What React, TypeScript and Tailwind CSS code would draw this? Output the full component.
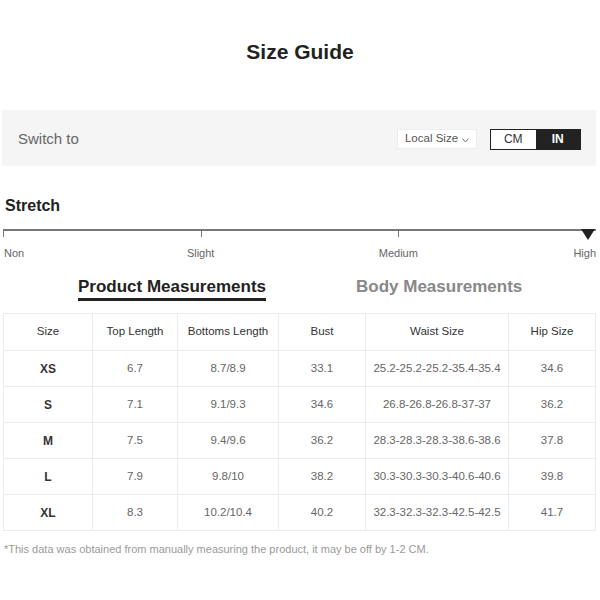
import React, { useState } from 'react';

interface RowI {
  size: string,
  top: string,
  bottoms: string,
  bust: string,
  waist: string,
  hip: string,
}

const rows: RowI[] = [
  { size: 'XS', top: '6.7', bottoms: '8.7/8.9', bust: '33.1', waist: '25.2-25.2-25.2-35.4-35.4', hip: '34.6' },
  { size: 'S', top: '7.1', bottoms: '9.1/9.3', bust: '34.6', waist: '26.8-26.8-26.8-37-37', hip: '36.2' },
  { size: 'M', top: '7.5', bottoms: '9.4/9.6', bust: '36.2', waist: '28.3-28.3-28.3-38.6-38.6', hip: '37.8' },
  { size: 'L', top: '7.9', bottoms: '9.8/10', bust: '38.2', waist: '30.3-30.3-30.3-40.6-40.6', hip: '39.8' },
  { size: 'XL', top: '8.3', bottoms: '10.2/10.4', bust: '40.2', waist: '32.3-32.3-32.3-42.5-42.5', hip: '41.7' },
]

const headers = ['Size', 'Top Length', 'Bottoms Length', 'Bust', 'Waist Size', 'Hip Size']
const colWidths = ['w-[89px]', 'w-[85px]', 'w-[101px]', 'w-[87px]', 'w-[143px]', 'w-[87px]']

const App: React.FC = () => {
  const [unit, setUnit] = useState('IN')
  const [tab, setTab] = useState('product')

  return (
    <div className="w-[600px] min-h-[600px] bg-white font-['Liberation_Sans',Arial,sans-serif] pt-[38px]">
      <h1 className="text-center text-[21px] leading-[28px] font-bold text-[#222]">Size Guide</h1>

      {/* switch bar */}
      <div className="mt-[44px] mx-[2px] w-[594px] h-[56px] bg-[#f5f5f5] flex items-center pl-4 pr-[15px] pt-[2px]">
        <span className="text-[15px] text-[#666]">Switch to</span>
        <div className="ml-auto flex items-center gap-[13px]">
          <button className="w-[80px] h-[20px] bg-white border border-[#ececec] flex items-center justify-center gap-[4px] text-[11.5px] text-[#555]">
            Local Size
            <svg width="7" height="5" viewBox="0 0 7 5" className="mt-[2px]">
              <polyline points="0.5,0.5 3.5,4 6.5,0.5" fill="none" stroke="#777" strokeWidth="1" />
            </svg>
          </button>
          <div className="flex w-[91px] h-[21px] border-[1.5px] border-[#222]">
            <button
              onClick={() => setUnit('CM')}
              className={unit === 'CM' ? 'flex-1 bg-[#222] text-white text-[12px] font-bold' : 'flex-1 bg-white text-[#333] text-[12px]'}
            >CM</button>
            <button
              onClick={() => setUnit('IN')}
              className={unit === 'IN' ? 'flex-1 bg-[#222] text-white text-[12px] font-bold' : 'flex-1 bg-white text-[#333] text-[12px]'}
            >IN</button>
          </div>
        </div>
      </div>

      {/* stretch */}
      <div className="mx-[3px] w-[593px]">
        <h2 className="mt-[30px] ml-[2px] text-[16px] leading-[20px] font-bold text-[#222]">Stretch</h2>
        <div className="relative mt-[13px] h-[12px] border-t-2 border-[#777]">
          <span className="absolute left-0 top-0 w-px h-[6px] bg-[#777]" />
          <span className="absolute left-[33.33%] top-0 w-px h-[6px] bg-[#777]" />
          <span className="absolute left-[66.67%] top-0 w-px h-[6px] bg-[#777]" />
          <svg width="14" height="11" viewBox="0 0 14 11" className="absolute right-[1px] -top-[2px]">
            <polygon points="0,0 14,0 7,11" fill="#222" />
          </svg>
        </div>
        <div className="relative h-[14px] mt-[5px] text-[11px] leading-[14px] text-[#666]">
          <span className="absolute left-[1px] top-0">Non</span>
          <span className="absolute left-[33.33%] top-0 -translate-x-1/2">Slight</span>
          <span className="absolute left-[66.67%] top-0 -translate-x-1/2">Medium</span>
          <span className="absolute right-0 top-0">High</span>
        </div>

        {/* tabs */}
        <div className="mt-[16px] flex text-[17px] leading-[22px] font-bold">
          <button
            onClick={() => setTab('product')}
            className={tab === 'product' ? 'ml-[75px] text-[#222] border-b-[3px] border-[#222]' : 'ml-[75px] text-[#888] border-b-[3px] border-transparent'}
          >Product Measurements</button>
          <button
            onClick={() => setTab('body')}
            className={tab === 'body' ? 'ml-[90px] text-[#222] border-b-[3px] border-[#222]' : 'ml-[90px] text-[#888] border-b-[3px] border-transparent'}
          >Body Measurements</button>
        </div>

        {/* table */}
        <table className="mt-[12px] w-[593px] table-fixed border-collapse text-center text-[11.5px]">
          <thead>
            <tr className="h-[37px]">
              {headers.map((h, i) => (
                <th key={h} className={`${colWidths[i]} border border-[#ebebeb] font-normal text-[#333]`}>{h}</th>
              ))}
            </tr>
          </thead>
          <tbody>
            {rows.map((v) => (
              <tr key={v.size} className="h-[36px]">
                <td className="border border-[#ebebeb] font-bold text-[#333] text-[12px]">{v.size}</td>
                <td className="border border-[#ebebeb] text-[#666]">{v.top}</td>
                <td className="border border-[#ebebeb] text-[#666]">{v.bottoms}</td>
                <td className="border border-[#ebebeb] text-[#666]">{v.bust}</td>
                <td className="border border-[#ebebeb] text-[#666]">{v.waist}</td>
                <td className="border border-[#ebebeb] text-[#666]">{v.hip}</td>
              </tr>
            ))}
          </tbody>
        </table>

        <p className="mt-[11px] ml-[1px] text-[11px] leading-[14px] text-[#999]">
          *This data was obtained from manually measuring the product, it may be off by 1-2 CM.
        </p>
      </div>
    </div>
  );
};

export default App;
